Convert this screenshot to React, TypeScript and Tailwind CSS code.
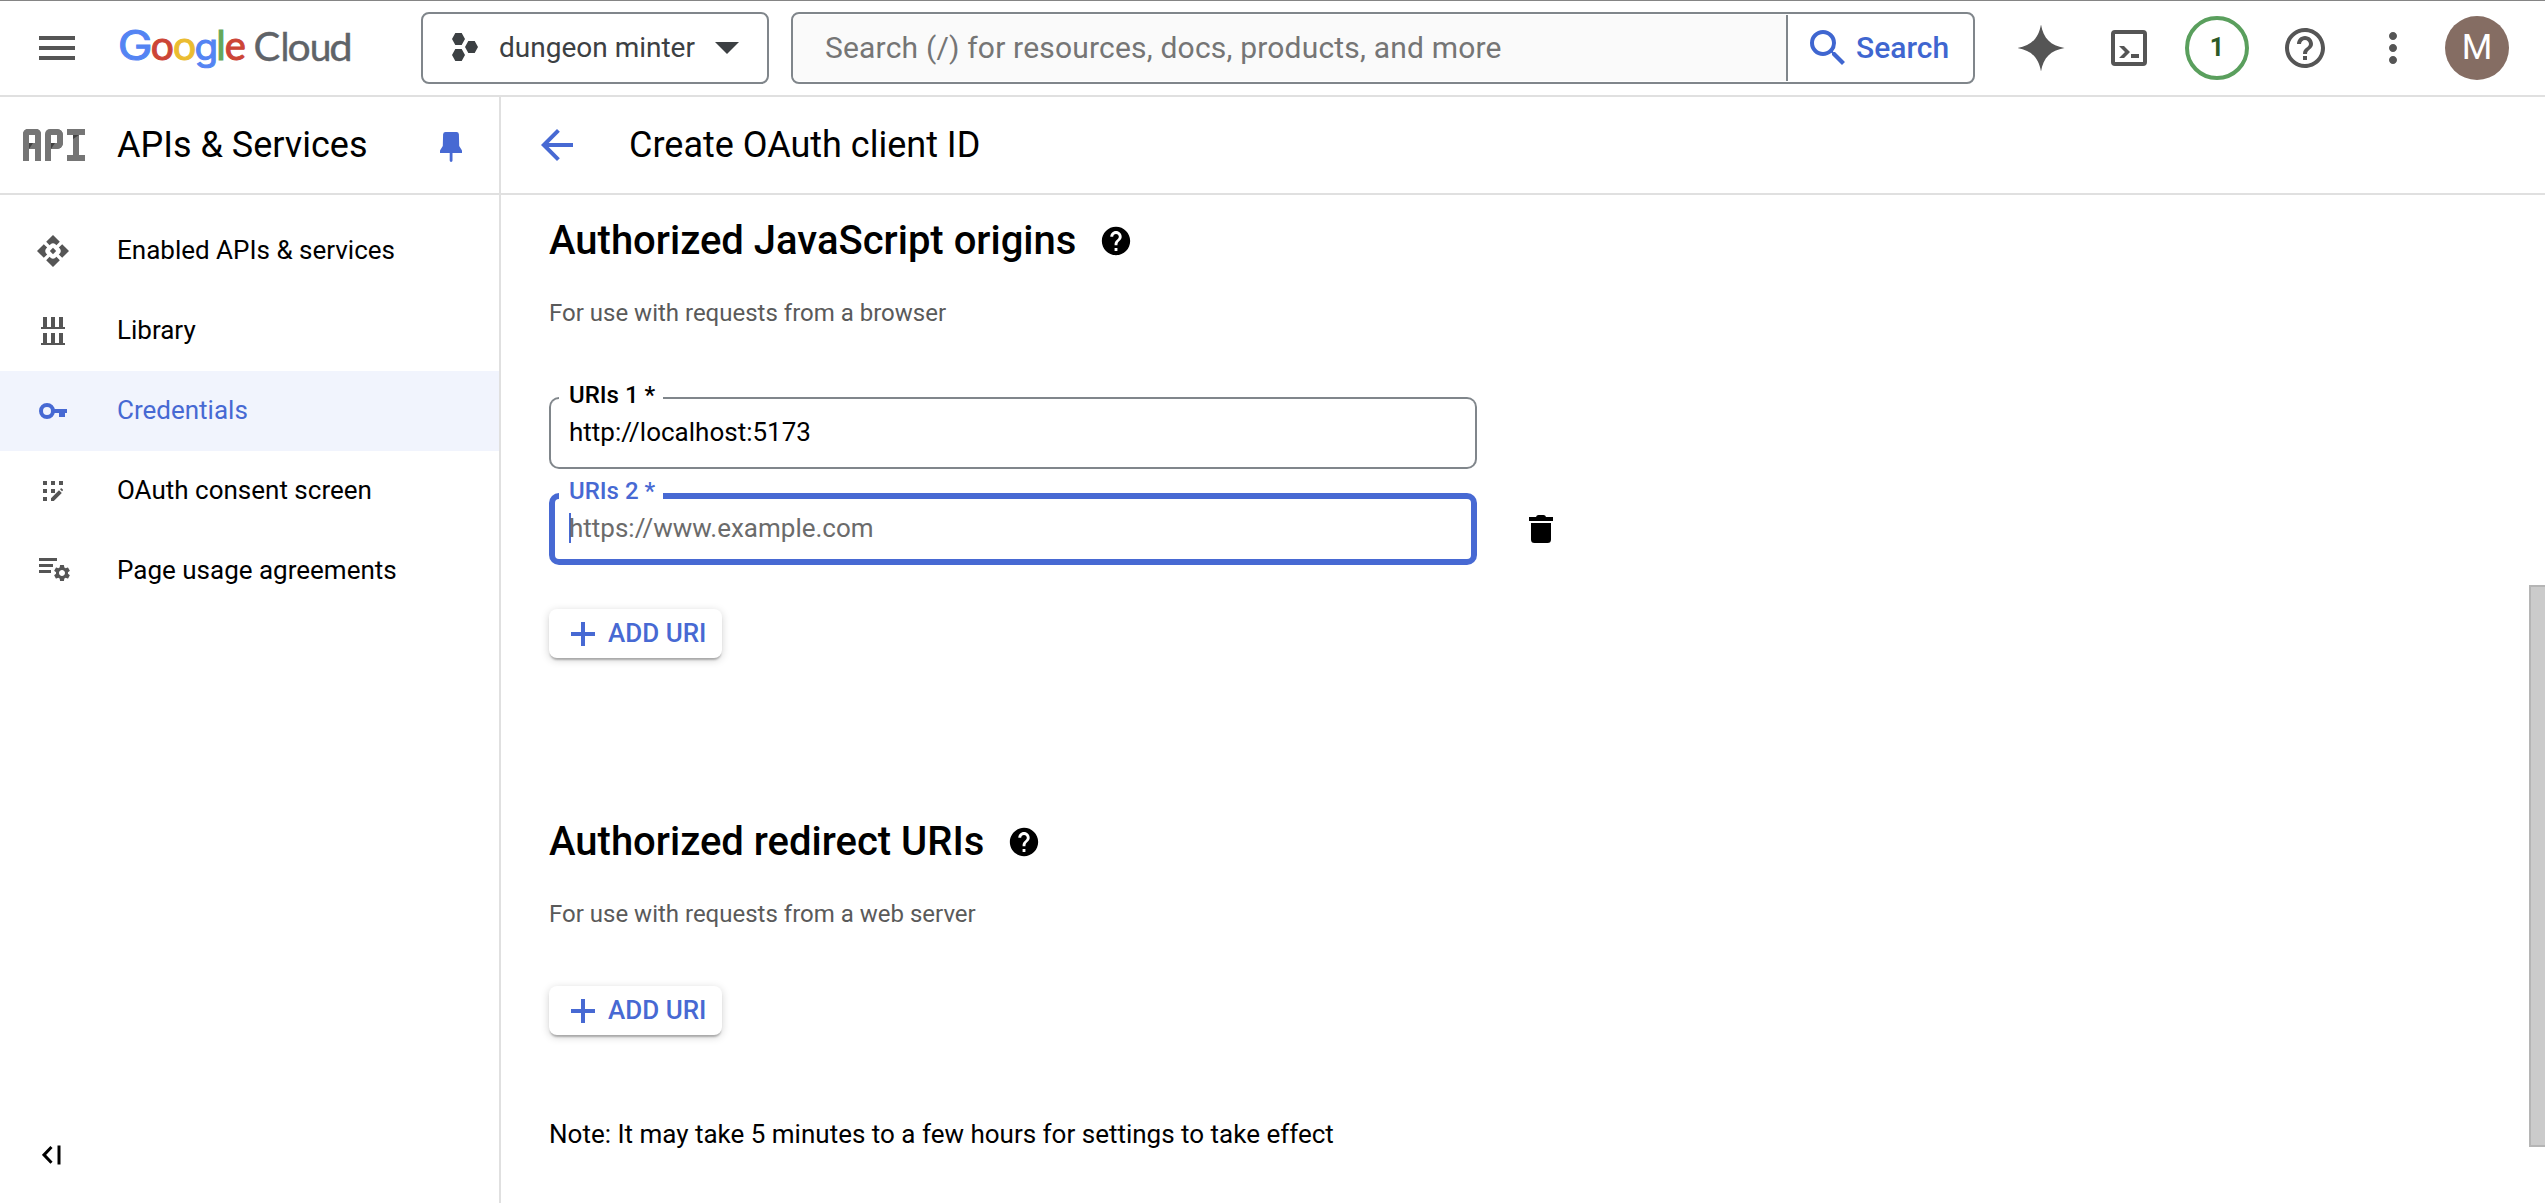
import type { ReactNode } from "react";
import {
  MdArrowBack,
  MdHelp,
  MdHelpOutline,
  MdMenu,
  MdMoreVert,
  MdSearch,
  MdSettings,
} from "react-icons/md";

const googleLetters = [
  { ch: "G", x: 0.7, size: 41, sx: 1.14, fill: "#5484f3", font: "Inter, sans-serif" },
  { ch: "o", x: 33.8, size: 40, sx: 1.02, fill: "#cc4536", font: "Lato, sans-serif" },
  { ch: "o", x: 56, size: 40, sx: 1.02, fill: "#ebbc30", font: "Lato, sans-serif" },
  { ch: "g", x: 77.6, size: 36, sx: 1.07, fill: "#5484f3", font: "Inter, sans-serif" },
  { ch: "l", x: 99.2, size: 40, sx: 1, fill: "#66a75a", font: "Lato, sans-serif" },
  { ch: "e", x: 107.8, size: 40, sx: 1, fill: "#cc4536", font: "Lato, sans-serif" },
];

const cloudLetters = [
  { ch: "C", x: 136.5, size: 40, sx: 1 },
  { ch: "l", x: 163.4, size: 38, sx: 1 },
  { ch: "o", x: 170.6, size: 39, sx: 1.05 },
  { ch: "u", x: 192.8, size: 39, sx: 1 },
  { ch: "d", x: 212.3, size: 38, sx: 1.1 },
];

function GoogleCloudLogo() {
  return (
    <svg className="ml-9 h-20 w-60 shrink-0" viewBox="0 -16 240 80">
      {googleLetters.map((l, i) => (
        <text
          key={i}
          transform={`translate(${l.x} 36.3) scale(${l.sx} 1)`}
          fontFamily={l.font}
          fontSize={l.size}
          fill={l.fill}
          stroke={l.fill}
          strokeWidth="1"
        >
          {l.ch}
        </text>
      ))}
      {cloudLetters.map((l, i) => (
        <text
          key={i}
          transform={`translate(${l.x} 36.6) scale(${l.sx} 1)`}
          fontFamily="Lato, sans-serif"
          fontSize={l.size}
          fill="#5f6368"
          stroke="#5f6368"
          strokeWidth="0.4"
        >
          {l.ch}
        </text>
      ))}
    </svg>
  );
}

function ApiIcon() {
  return (
    <div className="flex h-8 w-[62px] gap-1" aria-label="API">
      <div className="h-8 w-[18px] rounded-t-[5px] border-x-6 border-t-6 border-[#757575]">
        <div className="mt-2 h-1.5 bg-[#757575]">
          <div className="h-1.5 w-1 bg-[#424242] [clip-path:polygon(0_0,100%_0,0_100%)]" />
        </div>
      </div>
      <div className="h-8 w-[18px] rounded-tl-[5px] border-l-6 border-[#757575]">
        <div className="h-5 w-3 rounded-r-[6px] border-y-6 border-r-6 border-[#757575]" />
        <div className="-mt-1.5 h-1.5 w-1 bg-[#424242] [clip-path:polygon(0_0,100%_0,0_100%)]" />
      </div>
      <div className="flex h-8 w-[18px] flex-col items-center border-y-6 border-[#757575]">
        <div className="h-5 w-1.5 bg-[#757575]">
          <div className="h-1 w-1.5 bg-[#424242] [clip-path:polygon(0_0,100%_0,0_100%)]" />
        </div>
      </div>
    </div>
  );
}

function EnabledApisIcon() {
  return (
    <svg width="32" height="32" viewBox="-16 -16 32 32" fill="#555">
      <path d="M0-3.200L3.200 0 0 3.200-3.200 0z" />
      {[0, 90, 180, 270].map((a) => (
        <path
          key={a}
          transform={`rotate(${a})`}
          d="M0-16L6.800-9.200 3.400-5.800 2.400-6.800Q0-8.800-2.400-6.800L-3.400-5.800-6.800-9.200z"
        />
      ))}
    </svg>
  );
}

function LibraryIcon() {
  return (
    <svg width="24" height="28" viewBox="0 0 24 28" fill="#555">
      <path d="M2 0h4v10h4V0h4v10h4V0h4v10h2v2H0v-2h2zM2 16h4v10h4V16h4v10h4V16h4v10h2v2H0v-2h2z" />
    </svg>
  );
}

function KeyIcon() {
  return (
    <svg width="28" height="16" viewBox="0 0 28 16" fill="#4769d3">
      <circle cx="8" cy="8" r="6" fill="none" stroke="#4769d3" strokeWidth="4" />
      <path d="M14.500 6H28v4h-2v4h-6v-4h-5.500z" />
    </svg>
  );
}

function ConsentIcon() {
  return (
    <svg width="20" height="20" viewBox="0 0 20 20" fill="#555">
      <path d="M0 0h4v4H0zM8 0h4v4H8zM16 0h4v4h-4zM0 8h4v4H0zM0 16h4v4H0zM8 8h4v4H8z" />
      <path d="M8 20v-2.800L16 9.300l2.800 2.800L10.800 20zM17 8.300l.8-.8q.5-.4 1 0l1 1q.5.500 0 1l-.8.800z" />
    </svg>
  );
}

function AgreementsIcon() {
  return (
    <div className="relative ml-[3px] h-7 w-[31px]">
      <div className="flex flex-col gap-[3px] pt-px">
        <div className="h-[3px] w-[18px] bg-[#555]" />
        <div className="h-[3px] w-3.5 bg-[#555]" />
        <div className="h-[3px] w-3 bg-[#555]" />
      </div>
      <MdSettings className="absolute -right-0.5 top-1.5 size-[20px] text-[#555]" />
    </div>
  );
}

function NavItem({ icon, label, active }: { icon: ReactNode; label: string; active?: boolean }) {
  return (
    <a className={active ? "flex h-20 items-center bg-[#f1f4fd] text-[#4769d3]" : "flex h-20 items-center"}>
      <span className="flex w-[106px] shrink-0 justify-center">{icon}</span>
      <span className="ml-[11px] pb-0.5 text-[26px] leading-8">{label}</span>
    </a>
  );
}

function Field({ label, children, focused }: { label: string; children: ReactNode; focused?: boolean }) {
  const edge = focused ? "border-[#4769d3]" : "border-[#80868b]";
  return (
    <div className="relative h-[72px] w-[928px]">
      <div className="absolute inset-0 flex">
        <div className={`${edge} w-2.5 rounded-l-[10px] ${focused ? "border-y-6 border-l-6" : "border-y-2 border-l-2"}`} />
        <div className={`${edge} w-[104px] ${focused ? "border-b-6" : "border-b-2"}`} />
        <div className={`${edge} flex-1 rounded-r-[10px] ${focused ? "border-y-6 border-r-6" : "border-y-2 border-r-2"}`} />
      </div>
      <span
        className={`absolute left-5 -top-[18px] text-2xl leading-8 font-medium ${focused ? "text-[#4769d3]" : "text-black"}`}
      >
        {label}
      </span>
      <div className="flex h-full items-center pb-0.5 pl-5 text-[26px] leading-8">{children}</div>
    </div>
  );
}

function AddUriButton() {
  return (
    <button className="flex h-[49px] w-[173px] items-center rounded-lg bg-white pl-[22px] text-[26px] leading-8 font-medium text-[#4769d3] shadow-[0_3px_2px_-1px_rgba(0,0,0,0.26),0_2px_8px_rgba(0,0,0,0.18)]">
      <svg width="24" height="24" viewBox="0 0 24 24" fill="currentColor">
        <path d="M10 0h4v10h10v4H14v10h-4V14H0v-4h10z" />
      </svg>
      <span className="ml-[13px] pb-0.5">ADD URI</span>
    </button>
  );
}

function SectionTitle({ children }: { children: ReactNode }) {
  return (
    <div className="flex h-12 items-center">
      <h2 className="text-[40px] leading-[46px] font-medium">{children}</h2>
      <MdHelp className="ml-[23px] size-[34px] text-black" />
    </div>
  );
}

function TopBar() {
  return (
    <header className="flex h-[97px] shrink-0 items-center border-t border-b-2 border-t-[#858585] border-b-[#e0e0e0] pl-[33px] text-[#555]">
      <MdMenu className="size-12 shrink-0" />
      <GoogleCloudLogo />
      <button className="ml-16 flex h-[72px] w-[348px] shrink-0 items-center rounded-lg border-2 border-[#80868b] pl-[29px] text-[#3c4043]">
        <svg className="-mt-0.5" width="26" height="28" viewBox="0 0 26 28" fill="currentColor">
          <path d="M3.300 0h6.400L13 6l-3.300 6H3.300L0 6zM3.300 16h6.400L13 22l-3.300 6H3.300L0 22zM16.300 8h6.400L26 14l-3.300 6h-6.400L13 14z" />
        </svg>
        <span className="ml-[21px] text-[28px] leading-9">dungeon minter</span>
        <svg className="ml-5" width="24" height="12" viewBox="0 0 24 12" fill="currentColor">
          <path d="M0 0h24L12 12z" />
        </svg>
      </button>
      <div className="ml-[22px] flex h-[72px] w-[1184px] shrink-0 rounded-lg border-2 border-[#80868b]">
        <div className="my-px flex flex-1 items-center rounded-l-md border-r-2 border-[#80868b] bg-[#fafafa] pb-0.5 pl-8 text-[30px] tracking-[0.19px] text-[#757575]">
          Search (/) for resources, docs, products, and more
        </div>
        <button className="flex w-[185px] items-center pl-4 text-[30px] leading-9 font-medium text-[#3f66d0]">
          <MdSearch className="size-12" />
          <span className="ml-1">Search</span>
        </button>
      </div>
      <svg className="ml-[42px] size-12 shrink-0" viewBox="-24 -24 48 48" fill="currentColor">
        <path d="M0-23.500C2.500-9.500 9.500-2.500 23.500 0 9.500 2.500 2.500 9.500 0 23.500-2.500 9.500-9.500 2.500-23.500 0-9.500-2.500-2.500-9.500 0-23.500z" />
      </svg>
      <svg className="ml-10 size-12 shrink-0" viewBox="0 0 48 48" fill="none">
        <rect x="8" y="8" width="32" height="32" rx="2" stroke="currentColor" strokeWidth="4" />
        <path d="M14 22h5l6 6-6 6h-5l6-6z" fill="currentColor" />
        <path d="M26 30h8v4h-8z" fill="currentColor" />
      </svg>
      <div className="ml-8 flex size-16 shrink-0 items-center justify-center rounded-full border-4 border-[#5a9f5d] text-[25px] leading-8 font-bold text-[#2d5a27]">
        1
      </div>
      <MdHelpOutline className="ml-8 size-12 shrink-0" />
      <MdMoreVert className="ml-10 size-12 shrink-0" />
      <div className="ml-7 flex size-16 shrink-0 items-center justify-center rounded-full bg-[#856d63] text-[35px] leading-10 text-white">
        M
      </div>
    </header>
  );
}

function Sidebar() {
  return (
    <aside className="flex w-[501px] shrink-0 flex-col border-r-2 border-[#e0e0e0]">
      <div className="flex h-[98px] shrink-0 items-center border-b-2 border-[#e0e0e0] pl-[23px]">
        <ApiIcon />
        <h1 className="ml-8 flex-1 text-4xl leading-10">APIs &amp; Services</h1>
        <svg className="mt-1 mr-[37px]" width="22" height="30" viewBox="0 0 22 30" fill="#4769d3">
          <path d="M5.500 0h11q2.200 0 2.400 2.200l.3 11.800 2.500 4q.3.500.3 1.200V21H0v-1.800q0-.7.300-1.200l2.500-4L3.100 2.200Q3.300 0 5.500 0z" />
          <path d="M9.700 20h2.800v8.600q0 1.400-1.400 1.400t-1.400-1.400z" />
        </svg>
      </div>
      <nav className="mt-4 flex-1">
        <NavItem icon={<EnabledApisIcon />} label="Enabled APIs & services" />
        <NavItem icon={<LibraryIcon />} label="Library" />
        <NavItem icon={<KeyIcon />} label="Credentials" active />
        <NavItem icon={<ConsentIcon />} label="OAuth consent screen" />
        <NavItem icon={<AgreementsIcon />} label="Page usage agreements" />
      </nav>
      <button className="mb-[38px] ml-[42px] self-start">
        <svg width="20" height="20" viewBox="0 0 20 20" fill="none" stroke="#000">
          <path d="M9.500 2 2 9.900l7.500 7.800" strokeWidth="3" />
          <path d="M17 .5v19" strokeWidth="3" />
        </svg>
      </button>
    </aside>
  );
}

export default function App() {
  return (
    <div className="relative flex h-[1203px] w-[2545px] flex-col overflow-hidden bg-white font-[Roboto,sans-serif] text-black">
      <TopBar />
      <div className="flex min-h-0 flex-1">
        <Sidebar />
        <div className="flex flex-1 flex-col">
          <div className="flex h-[98px] shrink-0 items-center border-b-2 border-[#e0e0e0] pl-8">
            <MdArrowBack className="size-12 text-[#4769d3]" />
            <h1 className="ml-12 text-4xl leading-10">Create OAuth client ID</h1>
          </div>
          <main className="flex flex-1 flex-col items-start pt-[22px] pl-12">
            <SectionTitle>Authorized JavaScript origins</SectionTitle>
            <p className="mt-8 text-2xl leading-8 text-[#5a5a5a]">For use with requests from a browser</p>
            <div className="mt-[68px]">
              <Field label="URIs 1 *">http://localhost:5173</Field>
            </div>
            <div className="mt-6 flex items-center">
              <Field label="URIs 2 *" focused>
                <span className="h-[30px] w-0.5 bg-[#4769d3]" />
                <span className="-ml-0.5 text-[#6b6b6b]">https://www.example.com</span>
              </Field>
              <svg className="ml-[52px]" width="24" height="28" viewBox="0 0 24 28" fill="#000">
                <path d="M0 2h7q.5-2 2.500-2h5q2 0 2.500 2h7v4H0zM2 8h20v16.500q0 3.500-3.500 3.500h-13Q2 28 2 24.500z" />
              </svg>
            </div>
            <div className="mt-11">
              <AddUriButton />
            </div>
            <div className="mt-40">
              <SectionTitle>Authorized redirect URIs</SectionTitle>
            </div>
            <p className="mt-8 text-2xl leading-8 text-[#5a5a5a]">For use with requests from a web server</p>
            <div className="mt-14">
              <AddUriButton />
            </div>
            <p className="mt-[83px] text-[26px] leading-8">
              Note: It may take 5 minutes to a few hours for settings to take effect
            </p>
          </main>
        </div>
      </div>
      <div className="absolute top-[585px] right-0 h-[562px] w-4 border-y-2 border-l-2 border-[#b5b5b5] bg-[#cbcbcb]" />
    </div>
  );
}
